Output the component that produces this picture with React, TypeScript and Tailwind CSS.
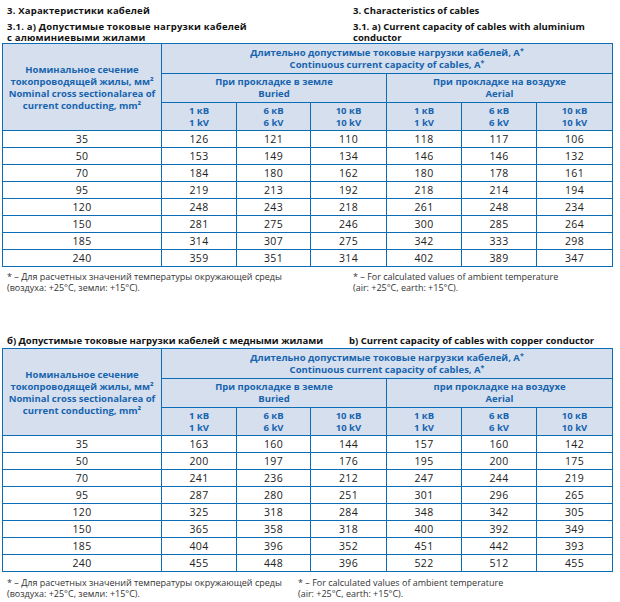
import React from 'react';

type Row = [string, number, number, number, number, number, number];

const aluminium: Row[] = [
  ['35', 126, 121, 110, 118, 117, 106],
  ['50', 153, 149, 134, 146, 146, 132],
  ['70', 184, 180, 162, 180, 178, 161],
  ['95', 219, 213, 192, 218, 214, 194],
  ['120', 248, 243, 218, 261, 248, 234],
  ['150', 281, 275, 246, 300, 285, 264],
  ['185', 314, 307, 275, 342, 333, 298],
  ['240', 359, 351, 314, 402, 389, 347],
];

const copper: Row[] = [
  ['35', 163, 160, 144, 157, 160, 142],
  ['50', 200, 197, 176, 195, 200, 175],
  ['70', 241, 236, 212, 247, 244, 219],
  ['95', 287, 280, 251, 301, 296, 265],
  ['120', 325, 318, 284, 348, 342, 305],
  ['150', 365, 358, 318, 400, 392, 349],
  ['185', 404, 396, 352, 451, 442, 393],
  ['240', 455, 448, 396, 522, 512, 455],
];

const th = 'border border-[#0b6db6] bg-[#d6dfee] text-[#1664ae] font-bold text-[9.5px] leading-[12px] text-center align-middle p-0';
const td = 'border border-[#0b6db6] text-[10.5px] tracking-[0.3px] leading-[16px] text-center text-[#222] p-0';

function Star() {
  return <span className="align-top text-[7px] leading-none">*</span>;
}

function CableTable({ rows, aerialLabel }: { rows: Row[]; aerialLabel: string }) {
  const volts = ['1', '6', '10', '1', '6', '10'];
  return (
    <table className="table-fixed border-collapse w-[611px]">
      <colgroup>
        <col className="w-[159px]" />
        <col className="w-[75px]" />
        <col className="w-[74px]" />
        <col className="w-[76px]" />
        <col className="w-[75px]" />
        <col className="w-[75px]" />
        <col className="w-[76px]" />
      </colgroup>
      <thead>
        <tr className="h-[30px]">
          <th rowSpan={3} className={`${th} leading-[11.5px] pt-[2px]`}>
            Номинальное сечение
            <br />
            токопроводящей жилы, мм²
            <br />
            Nominal cross sectionalarea of
            <br />
            current conducting, mm²
          </th>
          <th colSpan={6} className={th}>
            Длительно допустимые токовые нагрузки кабелей, А<Star />
            <br />
            Continuous current capacity of cables, A<Star />
          </th>
        </tr>
        <tr className="h-[29px]">
          <th colSpan={3} className={th}>
            При прокладке в земле
            <br />
            Buried
          </th>
          <th colSpan={3} className={th}>
            {aerialLabel}
            <br />
            Aerial
          </th>
        </tr>
        <tr className="h-[28px]">
          {volts.map((v, i) => (
            <th key={i} className={th}>
              {v} кВ
              <br />
              {v} kV
            </th>
          ))}
        </tr>
      </thead>
      <tbody>
        {rows.map((r) => (
          <tr key={r[0]} className="h-[17px]">
            {r.map((c, i) => (
              <td key={i} className={td}>
                {c}
              </td>
            ))}
          </tr>
        ))}
      </tbody>
    </table>
  );
}

export default function App() {
  return (
    <div className="w-[620px] h-[602px] bg-white overflow-hidden font-['Open_Sans',sans-serif] text-[#1a1a1a]">
      {/* заголовки раздела */}
      <div className="flex pt-[5px] text-[9.5px] font-bold leading-[11px] text-[#111]">
        <div className="w-[353px] pl-[7px] tracking-[0.2px]">
          <div>3. Характеристики кабелей</div>
          <div className="mt-[5px]">
            3.1. а) Допустимые токовые нагрузки кабелей
            <br />
            с алюминиевыми жилами
          </div>
        </div>
        <div>
          <div>3. Characteristics of cables</div>
          <div className="mt-[5px]">
            3.1. a) Current capacity of cables with aluminium
            <br />
            conductor
          </div>
        </div>
      </div>

      <div className="pl-[2px]">
        <CableTable rows={aluminium} aerialLabel="При прокладке на воздухе" />
      </div>

      <div className="flex mt-[4px] text-[9px] leading-[11px] text-[#333]">
        <div className="w-[353px] pl-[7px]">
          * – Для расчетных значений температуры окружающей среды
          <br />
          (воздуха: +25°С, земли: +15°С).
        </div>
        <div>
          * – For calculated values of ambient temperature
          <br />
          (air: +25°C, earth: +15°C).
        </div>
      </div>

      {/* медные жилы */}
      <div className="flex mt-[42px] mb-[2px] text-[9.5px] font-bold leading-[11px] text-[#111]">
        <div className="w-[349px] pl-[7px]">б) Допустимые токовые нагрузки кабелей с медными жилами</div>
        <div>b) Current capacity of cables with copper conductor</div>
      </div>

      <div className="pl-[2px]">
        <CableTable rows={copper} aerialLabel="при прокладке на воздухе" />
      </div>

      <div className="flex mt-[5px] text-[9px] leading-[11px] text-[#333]">
        <div className="w-[298px] pl-[7px]">
          * – Для расчетных значений температуры окружающей среды
          <br />
          (воздуха: +25°С, земли: +15°С).
        </div>
        <div>
          * – For calculated values of ambient temperature
          <br />
          (air: +25°C, earth: +15°C).
        </div>
      </div>
    </div>
  );
}
